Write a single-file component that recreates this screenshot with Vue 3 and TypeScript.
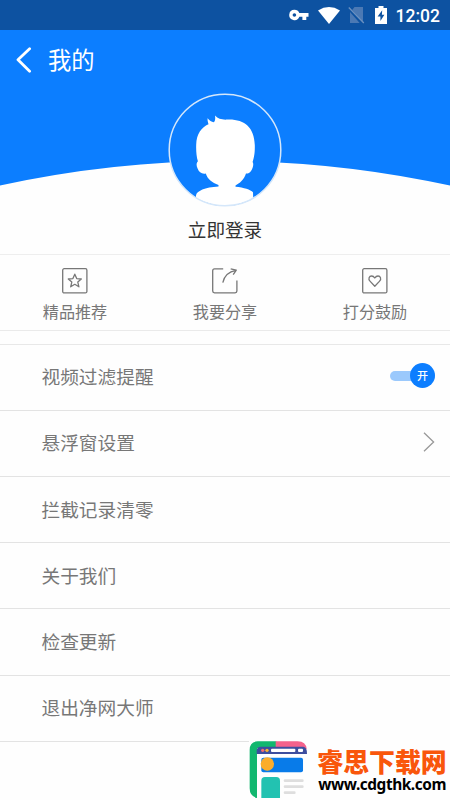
<script setup lang="ts">
import { ref } from 'vue'

interface Setting {
  label: string
  kind: 'toggle' | 'link' | 'plain'
}

const actions: { id: string; label: string }[] = [
  { id: 'star', label: '精品推荐' },
  { id: 'share', label: '我要分享' },
  { id: 'heart', label: '打分鼓励' },
]

const settings: Setting[] = [
  { label: '视频过滤提醒', kind: 'toggle' },
  { label: '悬浮窗设置', kind: 'link' },
  { label: '拦截记录清零', kind: 'plain' },
  { label: '关于我们', kind: 'plain' },
  { label: '检查更新', kind: 'plain' },
  { label: '退出净网大师', kind: 'plain' },
]

const enabled = ref(true)
</script>

<template>
  <div class="screen">
    <div class="status">
      <svg class="key" viewBox="0 0 20 12">
        <path fill-rule="evenodd" d="M5.4.8a5.2 5.2 0 1 0 4.9 7h3.1v3.1h3.9V7.8h2.2V4.1h-9.2A5.2 5.2 0 0 0 5.4.8Zm0 3.4a1.8 1.8 0 1 1 0 3.6 1.8 1.8 0 0 1 0-3.6Z" />
      </svg>
      <svg class="wifi" viewBox="0 0 22 17">
        <path d="M0 3.4Q11-3.2 22 3.4L11 17Z" />
      </svg>
      <svg class="sim" viewBox="0 0 17 18">
        <path d="M6.5 1H15v15L4.2 4ZM2 6l9.7 11H2Z" fill="#4b79b4" />
        <path d="m.8 1.5 15 15.5" fill="none" stroke="#6b91c0" stroke-width="1.3" />
      </svg>
      <svg class="battery" viewBox="0 0 12 18">
        <path fill-rule="evenodd" d="M3.5 0h5v2H12v16H0V2h3.5Zm3.7 4.2L2.6 10.5h2.8v4.6l4-6.4H6.9Z" />
      </svg>
      <span class="clock">12:02</span>
    </div>

    <header class="hero">
      <svg class="curve" viewBox="0 0 450 225" preserveAspectRatio="none">
        <path d="M0 0H450V155.5Q337 131 225 131Q113 131 0 155.5Z" fill="#0c7eff" />
      </svg>
      <div class="titlebar">
        <svg class="back" viewBox="0 0 16 26">
          <path d="M13.6 1.7 2 12.8l11.6 11.5" fill="none" stroke="#fff" stroke-width="2.8" stroke-linecap="round" stroke-linejoin="round" />
        </svg>
        <h1>我的</h1>
      </div>
      <svg class="avatar" viewBox="0 0 114 114">
        <defs>
          <clipPath id="avatar-disc"><circle cx="57" cy="57" r="55.8" /></clipPath>
        </defs>
        <circle cx="57" cy="57" r="56" fill="#0c7eff" />
        <path
          clip-path="url(#avatar-disc)"
          fill="#fff"
          d="M40.5 31.2C39.8 28.8 39.4 27.4 39.6 25.2C41.4 27.5 43.4 28.8 45.8 29.2C47.4 27.4 47.4 25.4 47 22.6C50.2 26 53.5 26.8 59 26.6C76 25.8 86.3 34 86.8 52C87 60 86 64.5 84.6 69.1C86 71 85 75 83 78C81.5 80.2 79.5 80.8 78 80.5C76 86.5 71.5 90.6 67.5 92.4V93.8C76 94.5 82.5 96.8 85 99.3L85.5 114H28V102.5C28.5 98 37 94.3 50.5 93.5V92C44 89.5 39.6 86.3 37.8 80.5C34 81.3 31 79.5 29.6 75.5C28 72 28.5 70 29.9 68.3C28.4 63.5 28 58 28.2 51.5C28.5 41 33.5 34 40.5 31.2Z"
        />
        <circle cx="57" cy="57" r="55.8" fill="none" stroke="#d5e7fa" stroke-width="1.5" />
      </svg>
      <div class="login">立即登录</div>
    </header>

    <nav class="actions">
      <div v-for="a in actions" :key="a.id" class="action">
        <svg viewBox="0 0 28 28" class="action-icon">
          <template v-if="a.id === 'star'">
            <rect x="1.7" y="1.7" width="24.2" height="24.2" rx="1.5" />
            <path d="m13.8 7.2 1.9 4.4 4.6.4-3.5 3.1 1.1 4.7-4.1-2.5-4.1 2.5 1.1-4.7-3.5-3.1 4.6-.4Z" />
          </template>
          <template v-else-if="a.id === 'share'">
            <path d="M12.2 1.9H3.5Q1.7 1.9 1.7 3.7v20.4q0 1.8 1.8 1.8h20.6q1.8 0 1.8-1.8V13.4M11.8 15.6C13.2 8.8 17.6 4.6 25 3.3M19.7 1.9l5.6 1.3-3.1 4.4" />
          </template>
          <template v-else>
            <rect x="1.7" y="1.7" width="24.2" height="24.2" rx="1.5" />
            <path d="M13.8 19.2 9.2 14.4C6.6 11.7 8.4 9 10.6 9q1.9 0 3.2 2Q15.1 9 17 9c2.2 0 4 2.7 1.4 5.4Z" />
          </template>
        </svg>
        <span>{{ a.label }}</span>
      </div>
    </nav>

    <main class="settings">
      <div v-for="s in settings" :key="s.label" class="row">
        <span>{{ s.label }}</span>
        <div v-if="s.kind === 'toggle'" class="toggle" :class="{ off: !enabled }" @click="enabled = !enabled">
          <b>{{ enabled ? '开' : '关' }}</b>
        </div>
        <svg v-else-if="s.kind === 'link'" class="chevron" viewBox="0 0 12 20">
          <path d="m1 .8 9.6 9.2L1 19.2" fill="none" stroke="#999" stroke-width="1.3" />
        </svg>
      </div>
    </main>

    <aside class="brand">
      <svg class="logo" viewBox="0 0 176 173">
        <path d="M82 1H26Q2 2 2 27v115q0 24 22 29V22h58Z" fill="#12b76f" />
        <path d="M80 1h66q25 1 27 23H80Z" fill="#f4628c" />
        <path d="M23 39V30q0-13 13-13h127q12 3 11 22Z" fill="#3d4e9f" />
        <circle cx="41" cy="28" r="5" fill="#f06b70" />
        <circle cx="54" cy="28" r="5" fill="#f9b335" />
        <rect x="66" y="23" width="73" height="10" rx="3" fill="#fff" />
        <rect x="147" y="23" width="15" height="10" rx="3" fill="#fff" />
        <rect x="37" y="50" width="125" height="44" rx="6" fill="#087be9" />
        <circle cx="55" cy="69" r="20" fill="#fbad2c" />
        <path d="M37 171v-52q0-11 11-11h34q11 0 11 11v52Z" fill="#22c2b1" />
        <path d="M108 119h52M108 137h52M108 155h28" stroke="#dedede" stroke-width="8" stroke-linecap="round" />
      </svg>
      <div class="brand-text">
        <strong>睿思下载网</strong>
        <em>www.cdgthk.com</em>
      </div>
    </aside>
  </div>
</template>

<style>
body {
  margin: 0;
  background: #fefefe;
}
</style>

<style scoped>
.screen {
  position: relative;
  width: 450px;
  height: 800px;
  overflow: hidden;
  background: #fefefe;
  color: #777;
  font-family: "Noto Sans CJK SC", sans-serif;
}
.status {
  height: 30px;
  box-sizing: border-box;
  padding-right: 10px;
  background: #0d52a1;
  display: flex;
  align-items: center;
  justify-content: flex-end;
  fill: #fff;
}
.key { width: 20px; height: 12px; margin-right: 9px; }
.wifi { width: 22px; height: 17px; margin-right: 8px; }
.sim { width: 17px; height: 18px; margin-right: 10px; }
.battery { width: 12px; height: 18px; margin-right: 9px; }
.clock {
  color: #fff;
  font: 500 17.5px/30px Roboto, sans-serif;
  padding-top: 1px;
}
.hero {
  position: relative;
  height: 224px;
  display: flex;
  flex-direction: column;
  align-items: center;
}
.curve {
  position: absolute;
  inset: 0;
  width: 450px;
  height: 225px;
}
.titlebar {
  position: relative;
  align-self: stretch;
  height: 60px;
  padding-left: 16px;
  display: flex;
  align-items: center;
}
.back { width: 16px; height: 26px; }
h1 {
  margin: 0 0 0 16px;
  padding-bottom: 2px;
  color: #fff;
  font-size: 23.3px;
  line-height: 58px;
  font-weight: 400;
}
.avatar {
  position: relative;
  width: 114px;
  height: 114px;
  margin-top: 3px;
}
.login {
  position: relative;
  margin-top: 7px;
  color: #333;
  font-size: 18.6px;
  line-height: 30px;
}
.actions {
  height: 75px;
  display: flex;
  border-top: 1px solid #eee;
  border-bottom: 1px solid #eaeaea;
}
.action {
  flex: 1;
  display: flex;
  flex-direction: column;
  align-items: center;
  padding-top: 12px;
  font-size: 16.1px;
  line-height: 24px;
}
.action-icon {
  width: 28px;
  height: 28px;
  margin-bottom: 4px;
  fill: none;
  stroke: #777;
  stroke-width: 1.3;
  stroke-linejoin: round;
}
.settings {
  margin-top: 12.6px;
  border-top: 1px solid #e8e8e8;
}
.row {
  height: 66.2px;
  box-sizing: border-box;
  padding: 0 15px 0 41px;
  border-bottom: 1px solid #e3e3e3;
  display: flex;
  align-items: center;
  justify-content: space-between;
  font-size: 18.7px;
}
.row span { padding: 0 0 3px 0.5px; }
.toggle {
  width: 45px;
  height: 10px;
  margin-bottom: 3px;
  border-radius: 5px;
  background: #9bc9fc;
  display: flex;
  align-items: center;
  justify-content: flex-end;
}
.toggle b {
  width: 25px;
  height: 25px;
  border-radius: 50%;
  background: #0c7eff;
  color: #fff;
  font-size: 11px;
  line-height: 24px;
  font-weight: 500;
  text-align: center;
}
.toggle.off { justify-content: flex-start; }
.chevron { width: 12px; height: 20px; margin-bottom: 2px; }
.brand {
  position: absolute;
  left: 249px;
  top: 740.7px;
  width: 201px;
  height: 60px;
  display: flex;
  background: #fefefe;
}
.logo { width: 58.7px; height: 57.7px; flex: none; }
.brand-text {
  margin: 4px 0 0 9.6px;
  display: flex;
  flex-direction: column;
}
strong {
  color: #f9560b;
  font-size: 25.9px;
  line-height: 31px;
  font-weight: 900;
  white-space: nowrap;
}
em {
  margin: 1.5px 0 0 1px;
  color: #000;
  font: normal 700 15.4px/16px "Noto Sans", "Open Sans", sans-serif;
  letter-spacing: -0.43px;
}
</style>
